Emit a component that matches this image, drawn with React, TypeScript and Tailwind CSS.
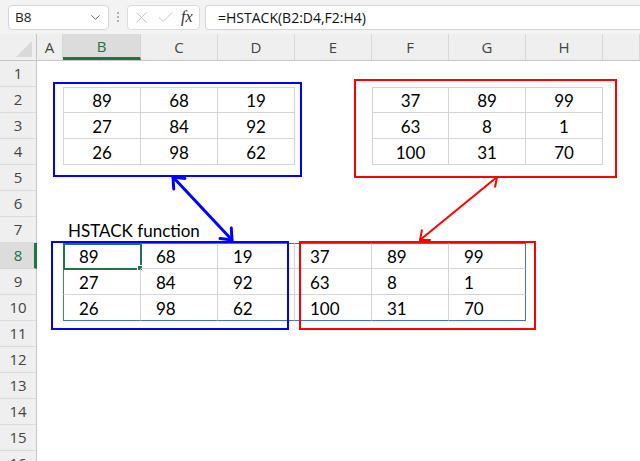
import { ChevronDown, X, Check } from "lucide-react";

const COLS = ["A", "B", "C", "D", "E", "F", "G", "H", ""];
const COL_W = [
  "w-[26px]",
  "w-[78px]",
  "w-[77px]",
  "w-[77px]",
  "w-[77px]",
  "w-[77px]",
  "w-[77px]",
  "w-[77px]",
  "flex-1",
];

// values keyed by "col,row" (col 0 = A)
const values: Record<string, string> = {};
const put = (c0: number, r0: number, rows: string[][]) =>
  rows.forEach((row, i) => row.forEach((v, j) => (values[`${c0 + j},${r0 + i}`] = v)));

put(1, 2, [
  ["89", "68", "19"],
  ["27", "84", "92"],
  ["26", "98", "62"],
]);
put(5, 2, [
  ["37", "89", "99"],
  ["63", "8", "1"],
  ["100", "31", "70"],
]);
put(1, 8, [
  ["89", "68", "19", "37", "89", "99"],
  ["27", "84", "92", "63", "8", "1"],
  ["26", "98", "62", "100", "31", "70"],
]);

const inside = (c: number, r: number, c1: number, c2: number, r1: number, r2: number) =>
  c >= c1 && c <= c2 && r >= r1 && r <= r2;

function cellClass(c: number, r: number) {
  const parts: string[] = [];
  if (inside(c, r, 1, 3, 2, 4) || inside(c, r, 5, 7, 2, 4)) {
    parts.push("border-r border-b border-[#d4d4d4] justify-center");
    if (r === 2) parts.push("border-t");
    if (c === 1 || c === 5) parts.push("border-l");
  }
  if (inside(c, r, 1, 6, 8, 10)) {
    parts.push("border-r border-b border-[#d4d4d4] pl-[15px]");
    if (r === 8) parts.push("border-t border-t-[#4472c4]");
    if (r === 10) parts.push("border-b-[#4472c4]");
    if (c === 1) parts.push("border-l border-l-[#4472c4]");
    if (c === 6) parts.push("border-r-[#4472c4]");
  }
  return parts.join(" ");
}

function FormulaBar() {
  return (
    <div className="flex h-[34px] items-center bg-[#f3f3f3] pl-2">
      <div className="flex h-[25px] w-[101px] items-center justify-between rounded-[4px] border border-[#d6d6d6] bg-white pl-[6px] pr-[5px]">
        <span className="text-[13.5px] text-[#222]">B8</span>
        <ChevronDown size={15} strokeWidth={1.5} className="text-[#555]" />
      </div>
      <div className="mx-[8px] flex flex-col gap-[2px]">
        <span className="h-[2px] w-[2px] rounded-full bg-[#9a9a9a]" />
        <span className="h-[2px] w-[2px] rounded-full bg-[#9a9a9a]" />
        <span className="h-[2px] w-[2px] rounded-full bg-[#9a9a9a]" />
      </div>
      <div className="flex h-[25px] w-[73px] items-center rounded-[4px] border border-[#dcdcdc] bg-white pl-[4px]">
        <X size={19} strokeWidth={1.1} className="text-[#bdbdbd]" />
        <Check size={19} strokeWidth={1.1} className="ml-[5px] text-[#bdbdbd]" />
        <span className="ml-[6px] font-['Liberation_Serif',serif] text-[16px] italic text-[#333]">fx</span>
      </div>
      <div className="ml-[5px] flex h-[25px] flex-1 items-center rounded-l-[4px] border border-r-0 border-[#d6d6d6] bg-white pl-[12px] text-[14px] text-[#111]">
        =HSTACK(B2:D4,F2:H4)
      </div>
    </div>
  );
}

function HeaderRow() {
  return (
    <div className="flex h-[27px] border-b border-[#c6c6c6] bg-[#efefef]">
      <div className="flex w-[37px] items-end justify-end border-r border-[#c6c6c6] pb-[3px] pr-[4px]">
        <svg width="16" height="16" viewBox="0 0 16 16">
          <polygon points="16,0 16,16 0,16" fill="#d9d9d9" />
        </svg>
      </div>
      {COLS.map((c, i) =>
        c === "B" ? (
          <div
            key={i}
            className={`${COL_W[i]} flex items-center justify-center border-b-[3px] border-r border-b-[#217346] border-r-[#d4d4d4] bg-[#dcdcdc] pt-[2px] text-[15px] text-[#217346]`}
          >
            {c}
          </div>
        ) : (
          <div
            key={i}
            className={`${COL_W[i]} flex items-center justify-center border-r border-[#d8d8d8] text-[15px] text-[#444]`}
          >
            {c}
          </div>
        )
      )}
    </div>
  );
}

function SheetRow({ r }: { r: number }) {
  const active = r === 8;
  return (
    <div className="flex h-[26px]">
      <div
        className={
          active
            ? "flex w-[37px] items-center justify-center border-b border-r-[3px] border-b-[#d4d4d4] border-r-[#217346] bg-[#dcdcdc] pl-[2px] text-[15px] text-[#217346]"
            : "flex w-[37px] items-center justify-center border-b border-r border-b-[#dadada] border-r-[#c6c6c6] bg-[#efefef] text-[15px] text-[#444]"
        }
      >
        {r}
      </div>
      {COLS.map((_, c) => {
        const v = values[`${c},${r}`];
        return (
          <div
            key={c}
            className={`${COL_W[c]} relative flex items-center pt-[2px] font-['Lato',sans-serif] text-[17px] text-black ${cellClass(c, r)}`}
          >
            {v}
            {r === 7 && c === 1 && (
              <span className="whitespace-nowrap pl-[5px]">HSTACK function</span>
            )}
            {r === 8 && c === 1 && (
              <>
                <div className="absolute -left-px -top-px h-[27px] w-[79px] border-2 border-[#217346]" />
                <div className="absolute -bottom-[3px] -right-[3px] h-[6px] w-[6px] border border-white bg-[#217346]" />
              </>
            )}
          </div>
        );
      })}
    </div>
  );
}

function Overlay() {
  return (
    <>
      <div className="absolute left-[53px] top-[48px] h-[95px] w-[249px] border-2 border-[#0000ff]" />
      <div className="absolute left-[354px] top-[45px] h-[99px] w-[263px] border-2 border-[#ff0000]" />
      <div className="absolute left-[51px] top-[207px] h-[89px] w-[238px] border-2 border-[#0000ff]" />
      <div className="absolute left-[299px] top-[207px] h-[89px] w-[237px] border-2 border-[#ff0000]" />
      <svg className="pointer-events-none absolute left-0 top-0" width="640" height="427">
        <g transform="translate(0,-34)" fill="none" strokeLinecap="round" strokeLinejoin="round">
          <g stroke="#0000ff" strokeWidth="3">
            <line x1="173" y1="177" x2="232" y2="240" />
            <polyline points="173.7,189 173,177 184.9,178.4" />
            <polyline points="231.3,228 232,240 220.1,238.6" />
          </g>
          <g stroke="#ff0000" strokeWidth="2">
            <line x1="497" y1="177" x2="420" y2="240" />
            <polyline points="487,177 497,177 495.1,186.8" />
            <polyline points="430,240 420,240 421.9,230.2" />
          </g>
        </g>
      </svg>
    </>
  );
}

export default function App() {
  const rows = Array.from({ length: 16 }, (_, i) => i + 1);
  return (
    <div className="h-[461px] w-[640px] overflow-hidden bg-white font-['Open_Sans',sans-serif] text-[14px]">
      <FormulaBar />
      <div className="relative">
        <HeaderRow />
        {rows.map((r) => (
          <SheetRow key={r} r={r} />
        ))}
        <Overlay />
      </div>
    </div>
  );
}
